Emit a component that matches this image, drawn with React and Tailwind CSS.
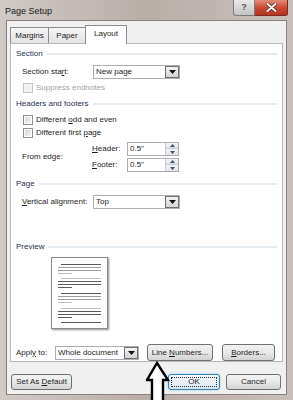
function U({ children }) {
  return <span className="underline underline-offset-1">{children}</span>;
}

function ComboArrow() {
  return (
    <span className="flex h-[12px] w-[14px] items-center justify-center border border-[#707070] bg-linear-to-b from-[#f4f4f4] to-[#d2d2d2]">
      <svg width="7" height="4" viewBox="0 0 7 4">
        <path d="M0 0h7L3.5 4z" fill="#111" />
      </svg>
    </span>
  );
}

function Combo({ value, width }) {
  return (
    <div className={`flex h-[14px] items-center border border-[#abadb3] bg-white pl-[2px] ${width}`}>
      <span className="flex-1 truncate">{value}</span>
      <ComboArrow />
    </div>
  );
}

function Spin({ value }) {
  return (
    <div className="flex h-[14px] w-[52px] items-center border border-[#abadb3] bg-white pl-[2px]">
      <span className="flex-1">{value}</span>
      <div className="flex h-[12px] w-[13px] flex-col border-l border-[#c7c9cf]">
        <span className="flex h-[6px] items-center justify-center border-b border-[#c7c9cf] bg-linear-to-b from-[#f6f6f6] to-[#e2e2e2]">
          <svg width="5" height="3" viewBox="0 0 5 3">
            <path d="M0 3h5L2.5 0z" fill="#3c4e7a" />
          </svg>
        </span>
        <span className="flex h-[6px] items-center justify-center bg-linear-to-b from-[#f6f6f6] to-[#e2e2e2]">
          <svg width="5" height="3" viewBox="0 0 5 3">
            <path d="M0 0h5L2.5 3z" fill="#3c4e7a" />
          </svg>
        </span>
      </div>
    </div>
  );
}

function Check({ label, disabled }) {
  return (
    <div className="flex h-[12px] items-center gap-[3px] pl-[7px]">
      <span
        className={`flex h-[10px] w-[10px] items-center justify-center border ${
          disabled ? "border-[#c4c4c4] bg-[#f4f4f4]" : "border-[#8e8f8f] bg-white"
        }`}
      >
        <span
          className={`h-[6px] w-[6px] ${
            disabled ? "bg-[#f0f0f0]" : "bg-linear-to-br from-[#d6d6d6] to-[#f7f7f7]"
          }`}
        />
      </span>
      <span className={disabled ? "text-[#a3a3a3]" : ""}>{label}</span>
    </div>
  );
}

function Group({ title, className = "" }) {
  return (
    <div className={`flex h-[12px] items-center gap-[4px] ${className}`}>
      <span className="text-[#1e2f4d]">{title}</span>
      <div className="h-[2px] flex-1 bg-[#e6ebf0]" />
    </div>
  );
}

function Button({ children, width, height = "h-[17px]" }) {
  return (
    <div
      className={`flex items-center justify-center rounded-[3px] border border-[#707070] bg-linear-to-b from-[#f3f3f3] via-[#e8e8e8] to-[#d3d3d3] ${width} ${height}`}
    >
      <span>{children}</span>
    </div>
  );
}

function PageThumb() {
  const W = "#5a5a5a";
  const G = "#9a9a9a";
  const L = "#bdbdbd";
  const lines = [
    [7, 10, W], [10, 7, G], [13, 7, G], [16, 7, L, 21],
    [21, 10, L], [24, 7, W], [27, 7, W], [30, 7, W, 21],
    [36, 10, W], [39, 7, G], [42, 7, G], [45, 7, L, 21],
    [51, 10, L], [54, 7, W], [57, 7, W], [60, 7, W, 21],
    [65, 10, W],
  ];
  return (
    <div className="ml-[35px] mt-[4px] h-[72px] w-[57px] border border-[#8a8a8a] bg-white shadow-[1px_1px_2px_rgba(0,0,0,0.45)]">
      <svg width="55" height="70" viewBox="1 1 55 70">
        {lines.map(([y, x1, c, x2], i) => (
          <rect key={i} x={x1} y={y} width={(x2 || 50) - x1} height="1" fill={c} />
        ))}
      </svg>
    </div>
  );
}

export default function App() {
  return (
    <div className="relative h-[400px] w-[293px] overflow-hidden bg-linear-to-r from-[#d0cac7] via-[#b9ada8] to-[#c9bfbb] font-['Liberation_Sans',Arial,sans-serif] text-[8px] text-[#1e1e1e]">
      {/* title bar */}
      <div className="flex h-[20px] items-start">
        <span className="pl-[5px] pt-[5px] text-[9px] text-[#1a1a1a]">Page Setup</span>
        <div className="ml-auto mr-[5px] flex">
          <div className="flex h-[16px] w-[22px] items-center justify-center rounded-bl-[3px] border border-t-0 border-[#7b7b7b] bg-linear-to-b from-[#e9e9e9] to-[#c3c3c3] text-[9px] font-bold text-[#555]">
            ?
          </div>
          <div className="flex h-[16px] w-[33px] items-center justify-center rounded-br-[3px] border border-l-0 border-t-0 border-[#7d2a20] bg-linear-to-b from-[#e28a78] via-[#cc4a38] to-[#b8321f]">
            <svg width="11" height="9" viewBox="0 0 11 9">
              <path d="M1.5 1l8 7M9.5 1l-8 7" stroke="#5a1d14" strokeWidth="3.4" strokeLinecap="round" />
              <path d="M1.5 1l8 7M9.5 1l-8 7" stroke="#fff" strokeWidth="2" strokeLinecap="round" />
            </svg>
          </div>
        </div>
      </div>

      {/* client area */}
      <div className="mx-[6px] flex h-[375px] flex-col border border-[#8d817c] bg-[#f0f0f0] pt-[4px]">
        {/* tabs */}
        <div className="relative z-10 -mb-px ml-[3px] flex h-[19px] items-start">
          <div className="mt-[2px] flex h-[16px] w-[39px] items-center justify-center border border-b-0 border-[#898c95] bg-linear-to-b from-[#f4f4f4] to-[#e3e3e3]">
            Margins
          </div>
          <div className="-ml-px mt-[2px] flex h-[16px] w-[38px] items-center justify-center border border-b-0 border-[#898c95] bg-linear-to-b from-[#f4f4f4] to-[#e3e3e3]">
            Paper
          </div>
          <div className="-ml-px flex h-[19px] w-[42px] items-center justify-center border border-b-0 border-[#898c95] bg-white pb-[2px]">
            Layout
          </div>
        </div>

        {/* panel */}
        <div className="mx-[3px] flex h-[319px] flex-col border border-[#b5b8bf] bg-white px-[5px]">
          <Group title="Section" className="mt-[4px]" />
          <div className="mt-[5px] flex h-[14px] items-center pl-[6px]">
            <span className="w-[71px]">
              Section sta<U>r</U>t:
            </span>
            <Combo value="New page" width="w-[87px]" />
          </div>
          <div className="mt-[3px]">
            <Check label="Suppress endnotes" disabled />
          </div>

          <Group title="Headers and footers" className="mt-[4px]" />
          <div className="mt-[4px]">
            <Check
              label={
                <>
                  Different <U>o</U>dd and even
                </>
              }
            />
          </div>
          <div className="mt-[1px]">
            <Check
              label={
                <>
                  Different first <U>p</U>age
                </>
              }
            />
          </div>
          <div className="mt-[3px] flex items-center pl-[6px]">
            <span className="w-[70px]">From edge:</span>
            <div className="flex flex-col gap-[2px]">
              <div className="flex items-center">
                <span className="w-[35px]">
                  <U>H</U>eader:
                </span>
                <Spin value='0.5"' />
              </div>
              <div className="flex items-center">
                <span className="w-[35px]">
                  <U>F</U>ooter:
                </span>
                <Spin value='0.5"' />
              </div>
            </div>
          </div>

          <Group title="Page" className="mt-[6px]" />
          <div className="mt-[5px] flex h-[14px] items-center pl-[6px]">
            <span className="w-[71px]">
              <U>V</U>ertical alignment:
            </span>
            <Combo value="Top" width="w-[87px]" />
          </div>

          <Group title="Preview" className="mt-[32px]" />
          <PageThumb />

          <div className="mt-[15px] flex h-[17px] items-center">
            <span className="w-[39px]">
              Appl<U>y</U> to:
            </span>
            <Combo value="Whole document" width="w-[84px]" />
            <div className="ml-[8px]">
              <Button width="w-[66px]">
                Line <U>N</U>umbers...
              </Button>
            </div>
            <div className="ml-[9px]">
              <Button width="w-[53px]">
                <U>B</U>orders...
              </Button>
            </div>
          </div>
        </div>

        {/* dialog buttons */}
        <div className="mt-[12px] flex items-center pl-[4px] pr-[5px]">
          <Button width="w-[61px]" height="h-[16px]">
            Set As <U>D</U>efault
          </Button>
          <div className="ml-auto flex gap-[6px]">
            <div className="flex h-[16px] w-[52px] items-center justify-center rounded-[3px] border border-[#3c7fb1] bg-linear-to-b from-[#f3f9fd] to-[#d8e6f1] p-[2px] shadow-[0_0_2px_#7fc4f0]">
              <div className="flex h-full w-full items-center justify-center border border-dotted border-[#333]">
                OK
              </div>
            </div>
            <Button width="w-[55px]" height="h-[16px]">
              Cancel
            </Button>
          </div>
        </div>
      </div>

      {/* annotation arrow */}
      <svg className="absolute left-[146px] top-[361px]" width="24" height="42" viewBox="0 0 24 42">
        <path
          d="M11 2L22 19H17V42H6V19H1Z"
          fill="#fff"
          stroke="#000"
          strokeWidth="2.4"
          strokeLinejoin="miter"
        />
      </svg>
    </div>
  );
}
